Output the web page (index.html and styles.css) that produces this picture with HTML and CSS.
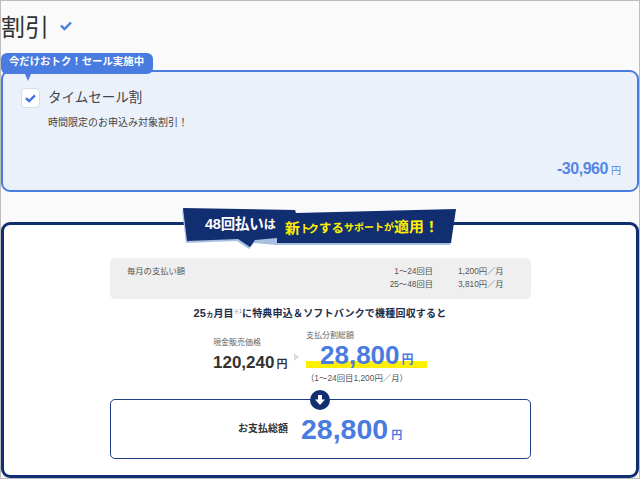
FILE: index.html
```html
<!DOCTYPE html>
<html lang="ja">
<head>
<meta charset="utf-8">
<title>割引</title>
<link rel="stylesheet" href="styles.css">
</head>
<body>
<main class="frame">
  <header class="title-row">
    <h1 class="title">割引</h1>
    <svg class="title-check" width="12" height="10" viewBox="0 0 12 10"><path d="M1 4.5 L4.5 8 L11 1.5" fill="none" stroke="#4a7be0" stroke-width="2.4"/></svg>
  </header>
  <section class="sale-card">
    <div class="sale-tag">今だけおトク！セール実施中</div>
    <div class="sale-row">
      <span class="checkbox"><svg width="11" height="9" viewBox="0 0 12 10"><path d="M1 4.5 L4.5 8 L11 1.5" fill="none" stroke="#3f72de" stroke-width="2.6"/></svg></span>
      <div class="sale-text">
        <div class="sale-name">タイムセール割</div>
        <div class="sale-desc">時間限定のお申込み対象割引！</div>
      </div>
    </div>
    <div class="sale-price"><b>-30,960</b><span>円</span></div>
  </section>
  <section class="plan-card">
    <div class="ribbon">
      <svg class="ribbon-bg" width="276" height="42" viewBox="0 0 276 42">
        <path d="M0 0 L112 2 L113 5 L273 1 L268 35 L94 35 L72 33 L67 39 L55 31 L4 33 Z" fill="#a9bfe0" transform="translate(-1 2)"/>
        <path d="M0 0 L112 2 L113 5 L273 1 L268 35 L94 35 L94 30 L72 32 L67 39 L55 31 L4 33 Z" fill="#112e70"/>
      </svg>
      <span class="ribbon-white">48回払い<small>は</small></span>
      <span class="ribbon-yellow"><span class="y-big">新</span><span class="y-tight">トク</span><span class="y-mid">する</span><span class="y-small">サポートが</span><span class="y-big">適用</span><span class="y-big">！</span></span>
    </div>
    <div class="monthly">
      <div class="monthly-label">毎月の支払い額</div>
      <div class="monthly-grid">
        <span>1〜24回目</span><span>1,200円／月</span>
        <span>25〜48回目</span><span>3,810円／月</span>
      </div>
    </div>
    <p class="condition"><span class="cond-num">25</span><small>カ</small>月目<sup>※1</sup>に特典申込＆ソフトバンクで機種回収すると</p>
    <div class="compare">
      <div class="cash">
        <div class="cap">現金販売価格</div>
        <div class="cash-price"><b>120,240</b><span>円</span></div>
      </div>
      <i class="arrow"></i>
      <div class="split">
        <div class="cap">支払分割総額</div>
        <div class="split-price"><b>28,800</b><span>円</span></div>
        <div class="note">（1〜24回目1,200円／月）</div>
      </div>
    </div>
    <div class="total">
      <span class="down"><svg width="12" height="12" viewBox="0 0 12 12"><path d="M4 1 H8 V5.5 H11 L6 11 L1 5.5 H4 Z" fill="#fff"/></svg></span>
      <span class="total-label">お支払総額</span>
      <span class="total-price"><b>28,800</b><span>円</span></span>
    </div>
  </section>
</main>
</body>
</html>
```
FILE: styles.css
```css
* { box-sizing: border-box; }
html, body { margin: 0; height: 479px; overflow: hidden; }
body {
  font-family: "Liberation Sans", "Noto Sans CJK JP", sans-serif;
  color: #333;
  background: #fafafa;
}
.frame {
  height: 479px;
  border: 1px solid #bdbdbd;
  overflow: hidden;
}
.title-row { display: flex; align-items: center; height: 52px; padding-top: 2px; }
.title { margin: 0; font-size: 24px; line-height: 50px; font-weight: 400; color: #333; }
.title-check { margin: 0 0 5px 11px; }

.sale-card {
  position: relative;
  height: 122px;
  margin-top: 17px;
  border: 2px solid #4a7be0;
  border-radius: 9px;
  background: #eaf1fb;
  padding: 16px 0 0 18px;
}
.sale-tag {
  position: absolute;
  left: -2px;
  top: -19px;
  width: 152px;
  height: 21px;
  border-radius: 6px;
  background: #4a7be0;
  color: #fff;
  font-size: 10.4px;
  font-weight: 700;
  line-height: 18px;
  text-align: center;
  white-space: nowrap;
  text-indent: -1px;
}
.sale-tag::after {
  content: "";
  position: absolute;
  left: 24px;
  top: 21px;
  border: 3.5px solid transparent;
  border-top: 7px solid #4a7be0;
  border-bottom: 0;
}
.sale-row { display: flex; }
.checkbox {
  display: flex;
  align-items: center;
  justify-content: center;
  width: 19px;
  height: 20px;
  border: 1.5px solid #d8dde6;
  border-radius: 4px;
  background: #fff;
}
.sale-text { margin-left: 8px; }
.sale-name { font-size: 13.5px; line-height: 20px; color: #444; }
.sale-desc { font-size: 10px; line-height: 14px; margin-top: 8px; color: #444; }
.sale-price {
  position: absolute;
  right: 16px;
  bottom: 12px;
  color: #5585e6;
  white-space: nowrap;
}
.sale-price b { font-size: 16px; letter-spacing: -.45px; }
.sale-price span { font-size: 10px; margin-left: 3px; }

.plan-card {
  position: relative;
  height: 256px;
  margin-top: 30px;
  border: 3px solid #112e70;
  border-radius: 9px;
  background: #fff;
  padding: 33px 0 0;
}
.ribbon {
  position: absolute;
  left: 179px;
  top: -17px;
  width: 276px;
  height: 42px;
}
.ribbon-bg { position: absolute; left: 0; top: 0; overflow: visible; }
.ribbon-white {
  position: absolute;
  left: 22px;
  top: 7px;
  color: #fff;
  font-size: 14.5px;
  font-weight: 700;
  line-height: 18px;
  white-space: nowrap;
  letter-spacing: -.2px;
}
.ribbon-white small { font-size: 12px; }
.ribbon-yellow {
  position: absolute;
  left: 102px;
  top: 11px;
  display: flex;
  align-items: center;
  color: #fff000;
  font-weight: 700;
  line-height: 18px;
  white-space: nowrap;
  transform: rotate(-.8deg);
}
.y-big { font-size: 15px; }
.y-tight { font-size: 11px; letter-spacing: -3px; margin-right: 3px; }
.y-mid { font-size: 12.5px; }
.y-small { font-size: 10px; }
.monthly {
  display: flex;
  justify-content: space-between;
  width: 421px;
  height: 41px;
  margin: 0 0 0 106px;
  padding: 7px 27px 0 17px;
  border-radius: 5px;
  background: #efefef;
  font-size: 8.3px;
  line-height: 13px;
  color: #555;
}
.monthly-grid {
  display: grid;
  grid-template-columns: auto 46px;
  grid-auto-rows: 13px;
  align-content: start;
  column-gap: 25px;
  justify-items: end;
}
.monthly-grid span { white-space: nowrap; }
.monthly-grid span:nth-child(even) { justify-self: start; }
.condition {
  margin: 6px 0 0;
  font-size: 10px;
  font-weight: 700;
  line-height: 16px;
  text-align: center;
  color: #222d4a;
  white-space: nowrap;
  letter-spacing: .2px;
}
.cond-num { font-size: 11px; }
.condition small { font-size: 7px; }
.condition sup { font-size: 5px; font-weight: 400; color: #777; line-height: 0; }
.compare { display: flex; height: 69px; margin: 7px 0 0 209px; }
.cash { width: 76px; padding-top: 7px; }
.cap { font-size: 8px; line-height: 12px; color: #666; white-space: nowrap; }
.cash-price { margin-top: 4px; white-space: nowrap; color: #333; line-height: 20px; }
.cash-price b { font-size: 17px; }
.cash-price span { font-size: 11px; font-weight: 700; margin-left: 2px; }
.arrow {
  width: 0;
  height: 0;
  margin: 23px 0 0 5px;
  border: 4px solid transparent;
  border-left: 5px solid #dcdcdc;
  border-right: 0;
}
.split { margin: 0 0 0 7px; width: 122px; }
.split-price {
  height: 27px;
  padding-left: 14px;
  line-height: 27px;
  color: #4a7be0;
  white-space: nowrap;
  background: linear-gradient(#fff000, #fff000) 0 calc(100% - 1px) / 121px 7px no-repeat;
}
.split-price b { font-size: 26px; }
.split-price span { font-size: 12px; font-weight: 700; margin-left: 2px; }
.note { margin-top: 3px; font-size: 8.4px; line-height: 12px; color: #555; white-space: nowrap; }
.total {
  position: relative;
  display: flex;
  align-items: center;
  width: 421px;
  height: 60px;
  margin-left: 106px;
  padding-left: 127px;
  border: 1px solid #1f3f86;
  border-radius: 5px;
}
.down {
  position: absolute;
  left: 199px;
  top: -10px;
  display: flex;
  align-items: center;
  justify-content: center;
  width: 20px;
  height: 20px;
  border-radius: 50%;
  background: #112e70;
}
.total-label { font-size: 10px; font-weight: 700; color: #333; white-space: nowrap; margin-top: -4px; }
.total-price { margin-left: 13px; color: #4a7be0; white-space: nowrap; }
.total-price b { font-size: 28.5px; }
.total-price span { font-size: 11px; font-weight: 700; margin-left: 3px; }
```
